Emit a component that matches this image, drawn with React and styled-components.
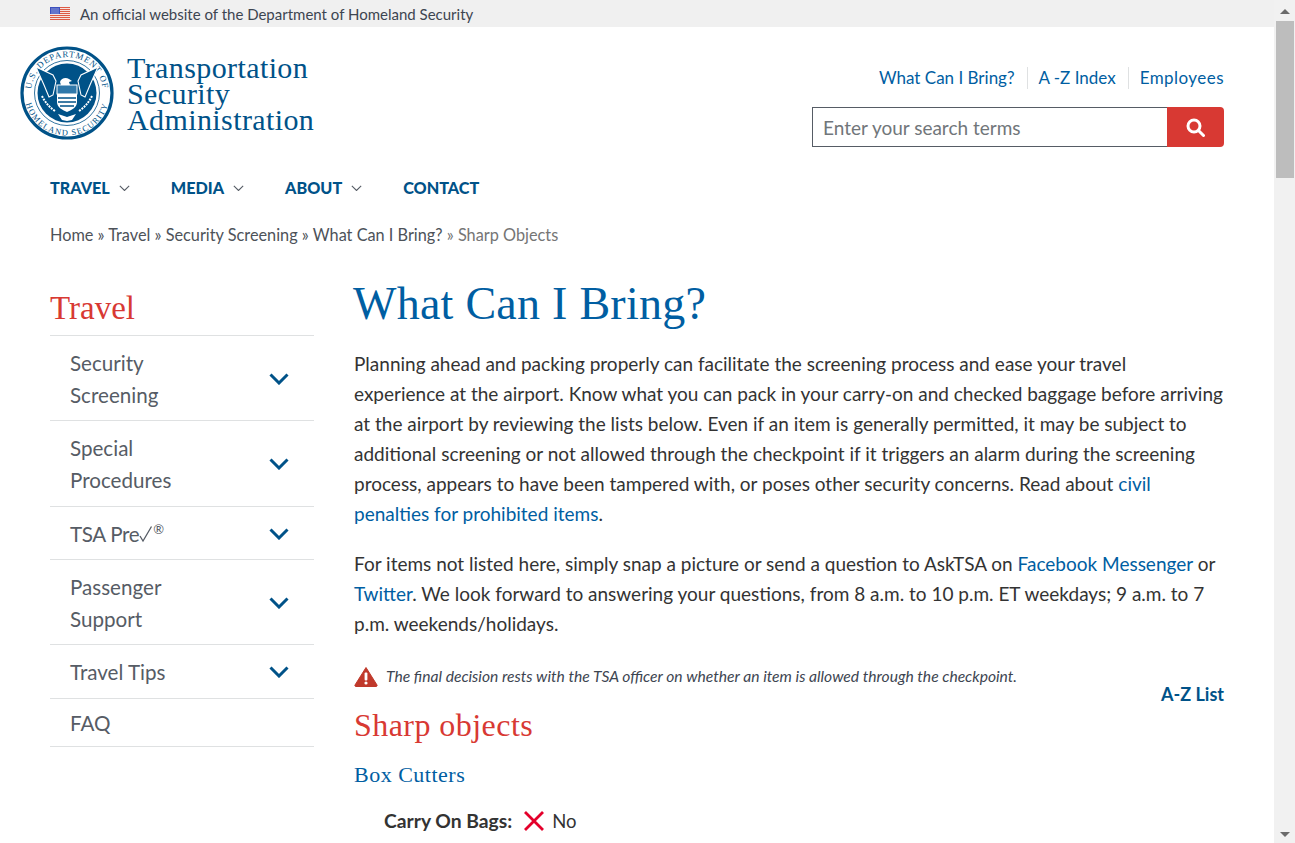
import React from "react";
import styled, { createGlobalStyle } from "styled-components";

const SANS = '"Lato", "Noto Sans", sans-serif';
const SERIF = '"Liberation Serif", serif';
const BLUE = "#005ea2";
const NAVY = "#005288";
const RED = "#d83933";

const GlobalStyle = createGlobalStyle`
  html, body {
    margin: 0;
    height: 843px;
    overflow: hidden;
    background: #fff;
  }
`;

const Viewport = styled.div`
  display: flex;
  height: 843px;
  overflow: hidden;
  font-family: ${SANS};
  color: #333;
`;

const Page = styled.div`
  width: 1274px;
  flex: none;
`;

const Scrollbar = styled.div`
  width: 21px;
  flex: none;
  background: #f1f1f1;
  display: flex;
  flex-direction: column;
  align-items: center;
  justify-content: space-between;
  padding: 9px 0 6px;
  box-sizing: border-box;
`;

const ScrollTop = styled.div`
  width: 100%;
  display: flex;
  flex-direction: column;
  align-items: center;
`;

const Thumb = styled.div`
  width: 18px;
  height: 157px;
  margin-top: 7px;
  background: #bdbdbd;
`;

const Arrow = styled.div`
  width: 0;
  height: 0;
  border-left: 5px solid transparent;
  border-right: 5px solid transparent;
  border-${(p) => (p.$up ? "bottom" : "top")}: 5px solid #6b6b6b;
`;

const GovBanner = styled.div`
  height: 27px;
  background: #f0f0f0;
  display: flex;
  align-items: center;
  gap: 10px;
  padding-left: 50px;
  font-size: 15px;
  color: #3d4551;
`;

const Header = styled.header`
  display: flex;
  justify-content: space-between;
  padding: 19px 50px 0 20px;
`;

const Brand = styled.div`
  display: flex;
  gap: 13px;
  align-items: flex-start;
`;

const BrandName = styled.div`
  font-family: ${SERIF};
  font-size: 30px;
  line-height: 26px;
  color: ${NAVY};
  padding-top: 9px;
  letter-spacing: 0.4px;
`;

const Utility = styled.div`
  display: flex;
  flex-direction: column;
  align-items: flex-end;
  padding-top: 21px;
  gap: 18px;
`;

const UtilityLinks = styled.div`
  display: flex;
  font-size: 17px;
  line-height: 22px;
`;

const UtilityLink = styled.a`
  color: ${BLUE};
  padding: 0 ${(p) => (p.$last ? "0" : "12px")} 0 ${(p) => (p.$first ? "0" : "11px")};
  border-left: ${(p) => (p.$first ? "none" : "1px solid #dfe1e2")};
  letter-spacing: ${(p) => (p.$last ? "0.45px" : "0")};
`;

const Search = styled.div`
  display: flex;
  width: 412px;
  height: 40px;
`;

const SearchInput = styled.div`
  flex: 1;
  border: 1px solid #565c65;
  border-right: none;
  display: flex;
  align-items: center;
  padding-left: 10px;
  font-size: 19px;
  color: #71767a;
`;

const SearchButton = styled.div`
  width: 57px;
  background: ${RED};
  border-radius: 0 4px 4px 0;
  display: flex;
  align-items: center;
  justify-content: center;
`;

const Nav = styled.nav`
  display: flex;
  padding: 29px 0 0 50px;
  gap: 41px;
  font-size: 16.2px;
  line-height: 24px;
  font-weight: 900;
  color: ${NAVY};
`;

const NavItem = styled.div`
  display: flex;
  align-items: center;
  gap: 9px;
`;

const Breadcrumbs = styled.div`
  padding: 24px 0 0 50px;
  font-size: 16.3px;
  line-height: 22px;
  color: #4d5259;
`;

const Current = styled.span`
  color: #757575;
`;

const Columns = styled.div`
  display: flex;
  gap: 40px;
  padding: 27px 50px 0;
`;

const Sidebar = styled.aside`
  width: 264px;
  flex: none;
`;

const SideTitle = styled.h2`
  margin: 0;
  padding-top: 15px;
  height: 62px;
  box-sizing: border-box;
  font: 400 33px/40px ${SERIF};
  color: ${RED};
`;

const SideItem = styled.div`
  display: flex;
  align-items: center;
  justify-content: space-between;
  border-top: 1px solid #dfe1e2;
  padding: ${(p) => (p.$plain ? "8px 25px 7px 20px" : "11px 25px 9.33px 20px")};
  font-size: 20.6px;
  line-height: 32px;
  color: #565c65;
  &:last-child {
    border-bottom: 1px solid #dfe1e2;
  }
`;

const PreLabel = styled.div`
  display: flex;
  align-items: center;
  letter-spacing: -0.35px;
`;

const PreMark = styled.span`
  align-self: flex-start;
  font-size: 13px;
  line-height: 22px;
`;

const Content = styled.main`
  flex: 1;
  min-width: 0;
`;

const Title = styled.h1`
  margin: 0 0 0 -1px;
  padding-top: 1px;
  font: 400 46px/60px ${SERIF};
  color: ${BLUE};
  letter-spacing: 0.26px;
`;

const Para = styled.p`
  margin: 0 0 20px;
  font-size: 19px;
  line-height: 30px;
  white-space: nowrap;
`;

const FirstPara = styled(Para)`
  margin-top: 15px;
`;

const TextLink = styled.a`
  color: ${BLUE};
`;

const NoticeRow = styled.div`
  display: flex;
  align-items: center;
  gap: 8px;
  height: 16px;
  margin-top: 29px;
  font-size: 15.65px;
  font-style: italic;
  color: #3d4551;
`;

const AzRow = styled.div`
  display: flex;
  justify-content: flex-end;
  margin-bottom: 3px;
  font-size: 18px;
  line-height: 20px;
  font-weight: 700;
  color: ${NAVY};
`;

const SectionTitle = styled.h2`
  margin: 0;
  font: 400 32px/36px ${SERIF};
  color: ${RED};
  letter-spacing: 0.45px;
`;

const ItemTitle = styled.h3`
  margin: 18px 0 0;
  font: 400 22px/28px ${SERIF};
  color: ${BLUE};
  letter-spacing: 0.5px;
`;

const Verdict = styled.div`
  display: flex;
  align-items: center;
  gap: 7px;
  margin-top: 18px;
  padding-left: 30px;
  font-size: 18.5px;
  line-height: 28px;
`;

const VerdictLabel = styled.strong`
  margin-right: 4px;
  font-size: 19.3px;
  font-weight: 700;
`;

const Chevron = ({ size = 20, color = NAVY, width = 3 }) => (
  <svg width={size} height={size * 0.6} viewBox="0 0 20 12" fill="none">
    <path d="M1.5 1.5 10 10l8.5-8.5" stroke={color} strokeWidth={width} />
  </svg>
);

const Flag = () => (
  <svg width="20" height="13" viewBox="0 0 20 13">
    <rect width="20" height="13" fill="#f6e4e0" />
    {[0, 2, 4, 6, 8, 10, 12].map((y) => (
      <rect key={y} y={y} width="20" height="1" fill="#dd5a44" />
    ))}
    <rect width="10" height="7" fill="#3c50bd" />
    {[1.5, 3.5, 5.5].map((y) =>
      [1.5, 3.5, 5.5, 7.5].map((x) => (
        <rect key={x + "-" + y} x={x} y={y} width="1" height="1" fill="#dfe3f5" />
      ))
    )}
  </svg>
);

const Seal = () => (
  <svg width="94" height="94" viewBox="0 0 94 94">
    <defs>
      <path id="sealTop" d="M11 47a36 36 0 0 1 72 0" />
      <path id="sealBottom" d="M5.95 36A42.5 42.5 0 1 0 88.05 36" />
    </defs>
    <circle cx="47" cy="47" r="45" fill="#fff" stroke={NAVY} strokeWidth="3.2" />
    <circle cx="47" cy="47" r="32.5" fill="none" stroke={NAVY} strokeWidth="0.8" />
    <text fontFamily={SERIF} fontSize="8.8" fill={NAVY} letterSpacing="0.9">
      <textPath href="#sealTop" startOffset="50%" textAnchor="middle">
        U.S. DEPARTMENT OF
      </textPath>
    </text>
    <circle cx="47" cy="47" r="29.5" fill={NAVY} />
    <path d="M16 21l17 8 3 6-3 14-4 2-5-12z" fill={NAVY} stroke="#fff" strokeWidth="1.1" />
    <path d="M78 21l-17 8-3 6 3 14 4 2 5-12z" fill={NAVY} stroke="#fff" strokeWidth="1.1" />
    <path d="M40 36c1-4 6-5 9-3l3 2-3 1 1 3h-9z" fill="#fff" />
    <rect x="37" y="39" width="20" height="9" fill="#2f78aa" stroke="#fff" strokeWidth="1" />
    <path d="M37 48h20v8c0 6-6 8-10 10-4-2-10-4-10-10z" fill="#fff" />
    <path d="M38 52h18M38 56h18M40 60h14" stroke={NAVY} strokeWidth="1.3" />
    <path d="M22 50c3 6 7 11 13 15M72 50c-3 6-7 11-13 15" stroke="#fff" strokeWidth="2" fill="none" strokeDasharray="2 1" />
    <path d="M38 68l9 3 9-3-4 6-5 1-5-1z" fill="#fff" />
    <text fontFamily={SERIF} fontSize="8.4" fill={NAVY} letterSpacing="1.2">
      <textPath href="#sealBottom" startOffset="50%" textAnchor="middle">
        HOMELAND SECURITY
      </textPath>
    </text>
  </svg>
);

const SearchIcon = () => (
  <svg width="19" height="19" viewBox="0 0 19 19" fill="none">
    <circle cx="8" cy="8" r="6" stroke="#fff" strokeWidth="3" />
    <path d="M12.5 12.5 17.5 17.5" stroke="#fff" strokeWidth="3" strokeLinecap="round" />
  </svg>
);

const WarningIcon = () => (
  <svg width="24" height="21" viewBox="0 0 24 21" style={{ flex: "none" }}>
    <path d="M12 1.5 23 19a1 1 0 0 1-1 1.5H2A1 1 0 0 1 1 19z" fill="#c0392b" stroke="#c0392b" strokeLinejoin="round" />
    <rect x="10.6" y="6.5" width="2.8" height="8" rx="1" fill="#fff" />
    <circle cx="12" cy="17" r="1.6" fill="#fff" />
  </svg>
);

const CrossIcon = () => (
  <svg width="22" height="20" viewBox="0 0 22 20" fill="none">
    <path d="M2 1l18 18M20 1 2 19" stroke="#e4002b" strokeWidth="2.8" />
  </svg>
);

const PreCheck = () => (
  <svg width="14" height="18" viewBox="0 0 14 18" fill="none">
    <path d="M1 11l3 5L12.5 1.5" stroke="#565c65" strokeWidth="1.3" />
  </svg>
);

const sideItems = [
  { label: ["Security", "Screening"] },
  { label: ["Special", "Procedures"] },
  { pre: true, label: ["TSA Pre"] },
  { label: ["Passenger", "Support"] },
  { label: ["Travel Tips"] },
];

export default function App() {
  return (
    <Viewport>
      <GlobalStyle />
      <Page>
        <GovBanner>
          <Flag />
          An official website of the Department of Homeland Security
        </GovBanner>
        <Header>
          <Brand>
            <Seal />
            <BrandName>
              Transportation
              <br />
              Security
              <br />
              Administration
            </BrandName>
          </Brand>
          <Utility>
            <UtilityLinks>
              <UtilityLink $first>What Can I Bring?</UtilityLink>
              <UtilityLink>A -Z Index</UtilityLink>
              <UtilityLink $last>Employees</UtilityLink>
            </UtilityLinks>
            <Search>
              <SearchInput>Enter your search terms</SearchInput>
              <SearchButton>
                <SearchIcon />
              </SearchButton>
            </Search>
          </Utility>
        </Header>
        <Nav>
          <NavItem>
            TRAVEL <Chevron size={11} color="#565c65" width={2} />
          </NavItem>
          <NavItem>
            MEDIA <Chevron size={11} color="#565c65" width={2} />
          </NavItem>
          <NavItem>
            ABOUT <Chevron size={11} color="#565c65" width={2} />
          </NavItem>
          <NavItem>CONTACT</NavItem>
        </Nav>
        <Breadcrumbs>
          Home » Travel » Security Screening » What Can I Bring? <Current>» Sharp Objects</Current>
        </Breadcrumbs>
        <Columns>
          <Sidebar>
            <SideTitle>Travel</SideTitle>
            {sideItems.map((item) => (
              <SideItem key={item.label[0]}>
                {item.pre ? (
                  <PreLabel>
                    TSA Pre
                    <PreCheck />
                    <PreMark>®</PreMark>
                  </PreLabel>
                ) : (
                  <div>
                    {item.label.map((line) => (
                      <div key={line}>{line}</div>
                    ))}
                  </div>
                )}
                <Chevron />
              </SideItem>
            ))}
            <SideItem $plain>FAQ</SideItem>
          </Sidebar>
          <Content>
            <Title>What Can I Bring?</Title>
            <FirstPara>
              Planning ahead and packing properly can facilitate the screening process and ease your travel
              <br />
              experience at the airport. Know what you can pack in your carry-on and checked baggage before arriving
              <br />
              at the airport by reviewing the lists below. Even if an item is generally permitted, it may be subject to
              <br />
              additional screening or not allowed through the checkpoint if it triggers an alarm during the screening
              <br />
              process, appears to have been tampered with, or poses other security concerns. Read about{" "}
              <TextLink>civil</TextLink>
              <br />
              <TextLink>penalties for prohibited items</TextLink>.
            </FirstPara>
            <Para>
              For items not listed here, simply snap a picture or send a question to AskTSA on{" "}
              <TextLink>Facebook Messenger</TextLink> or
              <br />
              <TextLink>Twitter</TextLink>. We look forward to answering your questions, from 8 a.m. to 10 p.m. ET
              weekdays; 9 a.m. to 7
              <br />
              p.m. weekends/holidays.
            </Para>
            <NoticeRow>
              <WarningIcon />
              The final decision rests with the TSA officer on whether an item is allowed through the checkpoint.
            </NoticeRow>
            <AzRow>A-Z List</AzRow>
            <SectionTitle>Sharp objects</SectionTitle>
            <ItemTitle>Box Cutters</ItemTitle>
            <Verdict>
              <VerdictLabel>Carry On Bags:</VerdictLabel>
              <CrossIcon />
              No
            </Verdict>
          </Content>
        </Columns>
      </Page>
      <Scrollbar>
        <ScrollTop>
          <Arrow $up />
          <Thumb />
        </ScrollTop>
        <Arrow />
      </Scrollbar>
    </Viewport>
  );
}
